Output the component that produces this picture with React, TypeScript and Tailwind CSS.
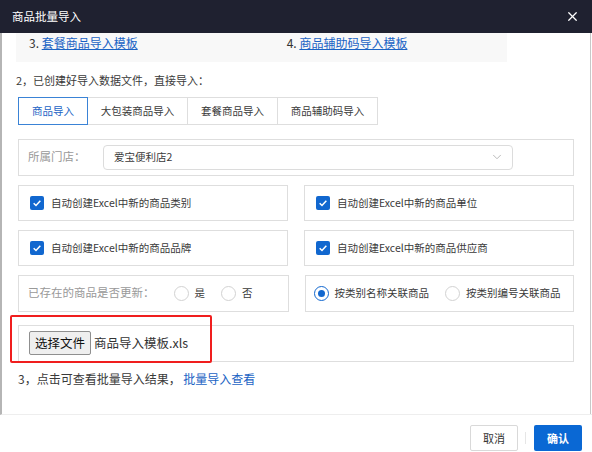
import { ChevronDown, X } from "lucide-react";

const font = { fontFamily: '"Noto Sans CJK SC", "Noto Sans", sans-serif' };

function Check({ label }: { label: string }) {
    return (
        <div className="flex-1 h-[36px] flex items-center px-[11px] border border-[#dedede] bg-white">
            <span className="w-[14px] h-[14px] rounded-[2px] bg-[#1167cf] flex items-center justify-center">
                <svg viewBox="0 0 12 12" className="w-[10px] h-[10px]">
                    <path d="M2 6.2 L4.8 9 L10 3.2" fill="none" stroke="white" strokeWidth="1.8" />
                </svg>
            </span>
            <span className="ml-[7px] text-[10.5px] text-[#3a3a3a] whitespace-nowrap">{label}</span>
        </div>
    );
}

function Radio({ label, checked }: { label: string; checked?: boolean }) {
    return (
        <span className="flex items-center gap-[6px] whitespace-nowrap">
            <span
                className={`w-[15px] h-[15px] rounded-full border flex items-center justify-center bg-white ${
                    checked ? "border-[#1167cf]" : "border-[#d2d2d2]"
                }`}
            >
                {checked && <span className="w-[7px] h-[7px] rounded-full bg-[#1167cf]" />}
            </span>
            <span className="text-[10.5px] text-[#3a3a3a]">{label}</span>
        </span>
    );
}

export default function App() {
    const tabs = ["商品导入", "大包装商品导入", "套餐商品导入", "商品辅助码导入"];

    return (
        <div style={font} className="w-[592px] h-[452px] bg-white flex flex-col overflow-hidden">
            <div className="h-[33px] shrink-0 bg-[#1f2130] flex items-center justify-between pl-[12px] pr-[12px]">
                <span className="text-white text-[11.5px]">商品批量导入</span>
                <X className="w-[15px] h-[15px] text-white" strokeWidth={2} />
            </div>

            <div className="flex h-[382px] border-l-2 border-[#b5b5b5] border-b border-b-[#eeeeee]">
                <div className="flex-1 flex flex-col pl-[14px] pr-[16px]">
                    <div className="w-[491px] h-[29px] bg-[#f8f8f8] flex items-start pt-[1px] text-[12px]">
                        <span className="ml-[13px] text-[#333]">
                            3. <span className="text-[#1a63c4] underline">套餐商品导入模板</span>
                        </span>
                        <span className="ml-[149px] text-[#333]">
                            4. <span className="text-[#1a63c4] underline">商品辅助码导入模板</span>
                        </span>
                    </div>

                    <div className="mt-[10px] text-[11px] text-[#3a3a3a]">2，已创建好导入数据文件，直接导入：</div>

                    <div className="mt-[8px] flex ml-[2px] h-[28px] text-[10.5px]">
                        {tabs.map((t, i) => (
                            <div
                                key={t}
                                className={`flex items-center justify-center border ${
                                    i === 0
                                        ? "w-[70px] border-[#3a83d6] text-[#1a63c4]"
                                        : i === 1
                                          ? "w-[100px] border-[#dedede] border-l-0 text-[#3a3a3a]"
                                          : i === 2
                                            ? "w-[90px] border-[#dedede] border-l-0 text-[#3a3a3a]"
                                            : "w-[100px] border-[#dedede] border-l-0 text-[#3a3a3a]"
                                }`}
                            >
                                {t}
                            </div>
                        ))}
                    </div>

                    <div className="mt-[14px] ml-[2px] w-[556px] h-[37px] border border-[#dedede] flex items-center pl-[9px]">
                        <span className="text-[11.5px] text-[#999] w-[75px]">所属门店：</span>
                        <div className="w-[410px] h-[25px] border border-[#dcdcdc] rounded-[4px] flex items-center justify-between pl-[10px] pr-[8px]">
                            <span className="text-[10.5px] text-[#3a3a3a]">爱宝便利店2</span>
                            <ChevronDown className="w-[14px] h-[14px] text-[#b0b0b0]" strokeWidth={1.5} />
                        </div>
                    </div>

                    <div className="mt-[9px] ml-[2px] w-[556px] flex flex-col gap-[9px]">
                        <div className="flex gap-[16px]">
                            <Check label="自动创建Excel中新的商品类别" />
                            <Check label="自动创建Excel中新的商品单位" />
                        </div>
                        <div className="flex gap-[16px]">
                            <Check label="自动创建Excel中新的商品品牌" />
                            <Check label="自动创建Excel中新的商品供应商" />
                        </div>
                        <div className="flex gap-[16px]">
                            <div className="flex-1 h-[37px] border border-[#dedede] flex items-center pl-[9px]">
                                <span className="text-[11.5px] text-[#999]">已存在的商品是否更新：</span>
                                <span className="ml-[19px] flex gap-[16px]">
                                    <Radio label="是" />
                                    <Radio label="否" />
                                </span>
                            </div>
                            <div className="flex-1 h-[37px] border border-[#dedede] flex items-center pl-[8px] gap-[16px]">
                                <Radio label="按类别名称关联商品" checked />
                                <Radio label="按类别编号关联商品" />
                            </div>
                        </div>
                    </div>

                    <div className="relative mt-[13px] ml-[2px] w-[556px] h-[37px] border border-[#dedede] flex items-center pl-[10px]">
                        <button className="h-[24px] px-[5px] bg-[#efefef] border border-[#8f8f8f] rounded-[2px] text-[12.5px] text-[#111]">
                            选择文件
                        </button>
                        <span className="ml-[3px] text-[12.5px] text-[#333]">商品导入模板.xls</span>
                        <div className="absolute left-[-9px] top-[-11px] w-[202px] h-[48px] border-2 border-[#f01e1e] rounded-[2px]" />
                    </div>

                    <div className="mt-[8px] ml-[2px] text-[12px] text-[#3a3a3a]">
                        3，点击可查看批量导入结果， <span className="text-[#1a63c4]">批量导入查看</span>
                    </div>
                </div>
                <div className="w-[3px] border-l border-[#c8c8c8] bg-white" />
            </div>

            <div className="flex-1 flex items-start justify-end pt-[10px] pr-[10px] gap-[7px]">
                <button className="w-[48px] h-[26px] border border-[#d9d9d9] rounded-[2px] bg-white text-[11px] text-[#333]">
                    取消
                </button>
                <span className="mt-[7px] w-px h-[12px] bg-[#e6e6e6]" />
                <button className="ml-px w-[48px] h-[26px] rounded-[2px] bg-[#0a68d4] text-[11px] text-white font-bold">
                    确认
                </button>
            </div>
        </div>
    );
}
